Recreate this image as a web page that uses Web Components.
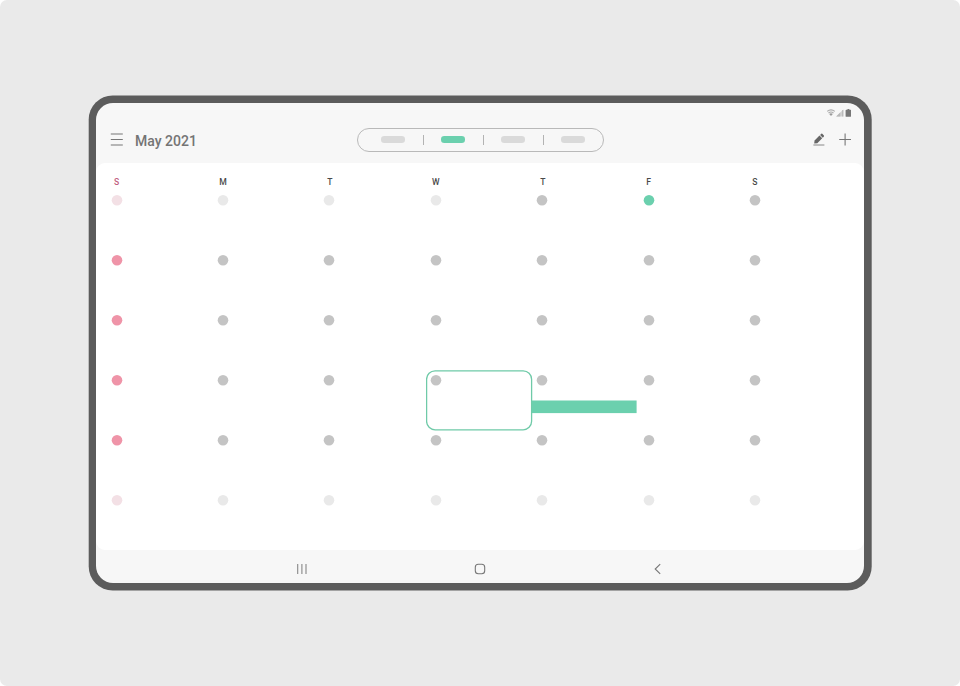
<!DOCTYPE html>
<html lang="en">
<head>
<meta charset="utf-8">
<title>Calendar</title>
<style>
html { background: #fff; }
body { margin: 0; width: 960px; height: 686px; overflow: hidden; font-family: Roboto, "Liberation Sans", sans-serif; }
</style>
</head>
<body>
<tablet-device>
  <calendar-header slot="header" month="May 2021"></calendar-header>
  <month-grid></month-grid>
  <nav-bar slot="nav"></nav-bar>
</tablet-device>
<script>
class Base extends HTMLElement {
  connectedCallback() {
    if (!this.shadowRoot) this.attachShadow({ mode: "open" }).innerHTML = this.render();
  }
}

customElements.define("status-icons", class extends Base {
  render() {
    return `<style>
      :host { display: flex; justify-content: flex-end; }
      svg { display: block; }
    </style>
    <svg width="26" height="10" viewBox="0 0 26 10">
      <g fill="none" stroke="#aaa" stroke-width="1.1">
        <path d="M1.2 3.4Q5 .3 8.8 3.4"/>
        <path d="M2.5 5Q5 3 7.5 5"/>
      </g>
      <path d="M3.2 5.9Q5 4.8 6.8 5.9L5 8z" fill="#999"/>
      <path d="M10.2 8.5L17.3 1.6V8.5z" fill="#d2d2d2"/>
      <path d="M10.2 8.5L14.2 4.6V8.5z" fill="#b8b8b8"/>
      <path d="M16.8 2v6.5" stroke="#aaa" stroke-width=".8"/>
      <path d="M20.3 1.7h1.2V.9h1.8v.8H24.500q.5 0 .5.500v6q0 .6-.6.6h-4.200q-.6 0-.6-.6v-6q0-.5.7-.5z" fill="#777"/>
    </svg>`;
  }
});

customElements.define("view-tabs", class extends Base {
  render() {
    const active = Number(this.getAttribute("active"));
    const tabs = [0, 1, 2, 3].map(i => `<div class="tab"><i class="${i === active ? "on" : ""}"></i></div>`).join('<b></b>');
    return `<style>
      :host { display: flex; align-items: center; justify-content: center; box-sizing: border-box;
        width: 247px; height: 24px; border: 1.4px solid #b9b9b9; border-radius: 12px; padding-left: 5px; }
      .tab { width: 59px; display: flex; justify-content: center; }
      i { width: 24px; height: 6.5px; border-radius: 3.3px; background: #dadada; }
      i.on { background: #6bd0ae; }
      b { width: 1px; height: 10px; background: #b3b3b3; }
    </style>${tabs}`;
  }
});

customElements.define("calendar-header", class extends Base {
  render() {
    return `<style>
      :host { display: grid; grid-template-rows: 19px 35px; height: 60px; }
      status-icons { padding: 5px 12px 0 0; }
      .bar { display: grid; grid-template-columns: 261px 247px 1fr; align-items: center; height: 35px; }
      .left { display: flex; align-items: center; padding-left: 14px; }
      h1 { margin: 3px 0 0 12px; font-size: 14px; line-height: 18px; font-weight: 500; color: #747474; letter-spacing: 0; }
      .actions { display: flex; align-items: center; justify-content: flex-end; gap: 13px; padding-right: 12px; }
      svg { display: block; }
    </style>
    <status-icons></status-icons>
    <div class="bar">
      <div class="left">
        <svg width="13" height="13" viewBox="0 0 13 13" stroke="#777" stroke-width="1.1"><path d="M.8 1h12M.8 6.500h12M.8 12h12"/></svg>
        <h1>${this.getAttribute("month")}</h1>
      </div>
      <view-tabs active="1"></view-tabs>
      <div class="actions">
        <svg width="13" height="13" viewBox="0 0 13 13">
          <path d="M1.600 7.500L6.500 2.600L9.200 5.300L4.300 10.200L1.200 10.400z" fill="#666"/>
          <path d="M7.100 2L8.300.8q.5-.4 1 0L10.900 2.400q.5.5 0 1L9.800 4.700z" fill="#666"/>
          <path d="M.4 12h11" stroke="#888" stroke-width="1"/>
        </svg>
        <svg width="13" height="13" viewBox="0 0 13 13" stroke="#777" stroke-width="1.1"><path d="M.2 6.500h11.8M6.100.6v11.8"/></svg>
      </div>
    </div>`;
  }
});

customElements.define("day-cell", class extends Base {
  render() {
    const selected = this.hasAttribute("selected");
    return `<style>
      :host { display: block; position: relative; box-sizing: border-box; padding: 4px 0 0 4px; --dot: #c4c4c4; }
      :host([kind="faded"]) { --dot: #e9e9e9; }
      :host([kind="sunday"]) { --dot: #ef94a8; }
      :host([kind="sunday-faded"]) { --dot: #f3e0e5; }
      :host([kind="today"]) { --dot: #6bd0ae; }
      svg { display: block; }
      circle { fill: var(--dot); }
      .outline { position: absolute; inset: 0 auto auto 0; }
      .event { position: absolute; left: 106px; top: 30px; z-index: 1; }
    </style>
    <svg width="12" height="12" viewBox="0 0 12 12"><circle cx="6" cy="6.300" r="5.300"/></svg>
    ${selected ? `<svg class="outline" width="107" height="61" viewBox="0 0 107 61" fill="none"><rect x=".6" y=".8" width="105" height="59" rx="8.5" stroke="#6fcaa8" stroke-width="1.3"/></svg>
    <svg class="event" width="106" height="14" viewBox="0 0 106 14"><rect x="0" y=".5" width="104.600" height="12.600" fill="#6bd0ae"/></svg>` : ""}`;
  }
});

customElements.define("month-grid", class extends Base {
  render() {
    const days = ["S", "M", "T", "W", "T", "F", "S"].map(d => `<span>${d}</span>`).join("");
    let cells = "";
    for (let r = 0; r < 6; r++) for (let c = 0; c < 7; c++) {
      const outside = (r === 0 && c < 4) || r === 5;
      let kind = c === 0 ? (outside ? "sunday-faded" : "sunday") : outside ? "faded" : "day";
      if (r === 0 && c === 5) kind = "today";
      cells += `<day-cell kind="${kind}"${r === 3 && c === 3 ? " selected" : ""}></day-cell>`;
    }
    return `<style>
      :host { display: block; box-sizing: border-box; height: 387px; background: #fff; border-radius: 9px; padding: 12px 0 0 10.6px; }
      .week, .days { display: grid; grid-template-columns: repeat(7, 106.4px); }
      .week { height: 15px; font-size: 8.6px; font-weight: 500; line-height: 14px; color: #4a4a4a; }
      .week span { width: 20px; text-align: center; }
      .week span:first-child { color: #c1607f; }
      .week span:nth-child(3), .week span:nth-child(5) { padding-left: .6px; }
      .days { grid-auto-rows: 60px; }
    </style>
    <div class="week">${days}</div>
    <div class="days">${cells}</div>`;
  }
});

customElements.define("nav-bar", class extends Base {
  render() {
    return `<style>
      :host { display: grid; grid-template-columns: 206px 356px 206px; height: 33px; padding-top: 4px; box-sizing: border-box; }
      div { display: flex; align-items: center; justify-content: center; height: 30px; }
      .recent { justify-content: flex-end; margin-right: -6px; }
      .back { justify-content: flex-start; margin-left: -6px; }
      svg { display: block; }
    </style>
    <div class="recent"><svg width="12" height="12" viewBox="0 0 12 12" stroke="#888" stroke-width="1.1"><path d="M1.7 1v10M5.9 1v10M10 1v10"/></svg></div>
    <div><svg width="12" height="12" viewBox="0 0 12 12" fill="none" stroke="#777" stroke-width="1.1"><rect x="1.3" y="1.3" width="9.4" height="9.4" rx="3"/></svg></div>
    <div class="back"><svg width="12" height="12" viewBox="0 0 12 12" fill="none" stroke="#777" stroke-width="1.1"><path d="M8.2 1.2L3.2 6L8.2 10.8"/></svg></div>`;
  }
});

customElements.define("tablet-device", class extends Base {
  render() {
    return `<style>
      :host { display: flex; box-sizing: border-box; width: 960px; height: 686px; padding: 95px 0 0 88px; background: #eaeaea; border-radius: 7px; align-items: flex-start; }
      .frame { display: grid; grid-template: 496px / 784px; }
      .frame > * { grid-area: 1 / 1; }
      .screen { margin: 8px; width: 768px; height: 480px; border-radius: 17px; overflow: hidden; background: #f7f7f7; }
    </style>
    <div class="frame">
      <svg width="784" height="496" viewBox="0 0 784 496"><rect x=".7" y=".5" width="783" height="495" rx="24" fill="#5c5c5c"/></svg>
      <div class="screen">
        <slot name="header"></slot><slot></slot><slot name="nav"></slot>
      </div>
    </div>`;
  }
});
</script>
</body>
</html>
